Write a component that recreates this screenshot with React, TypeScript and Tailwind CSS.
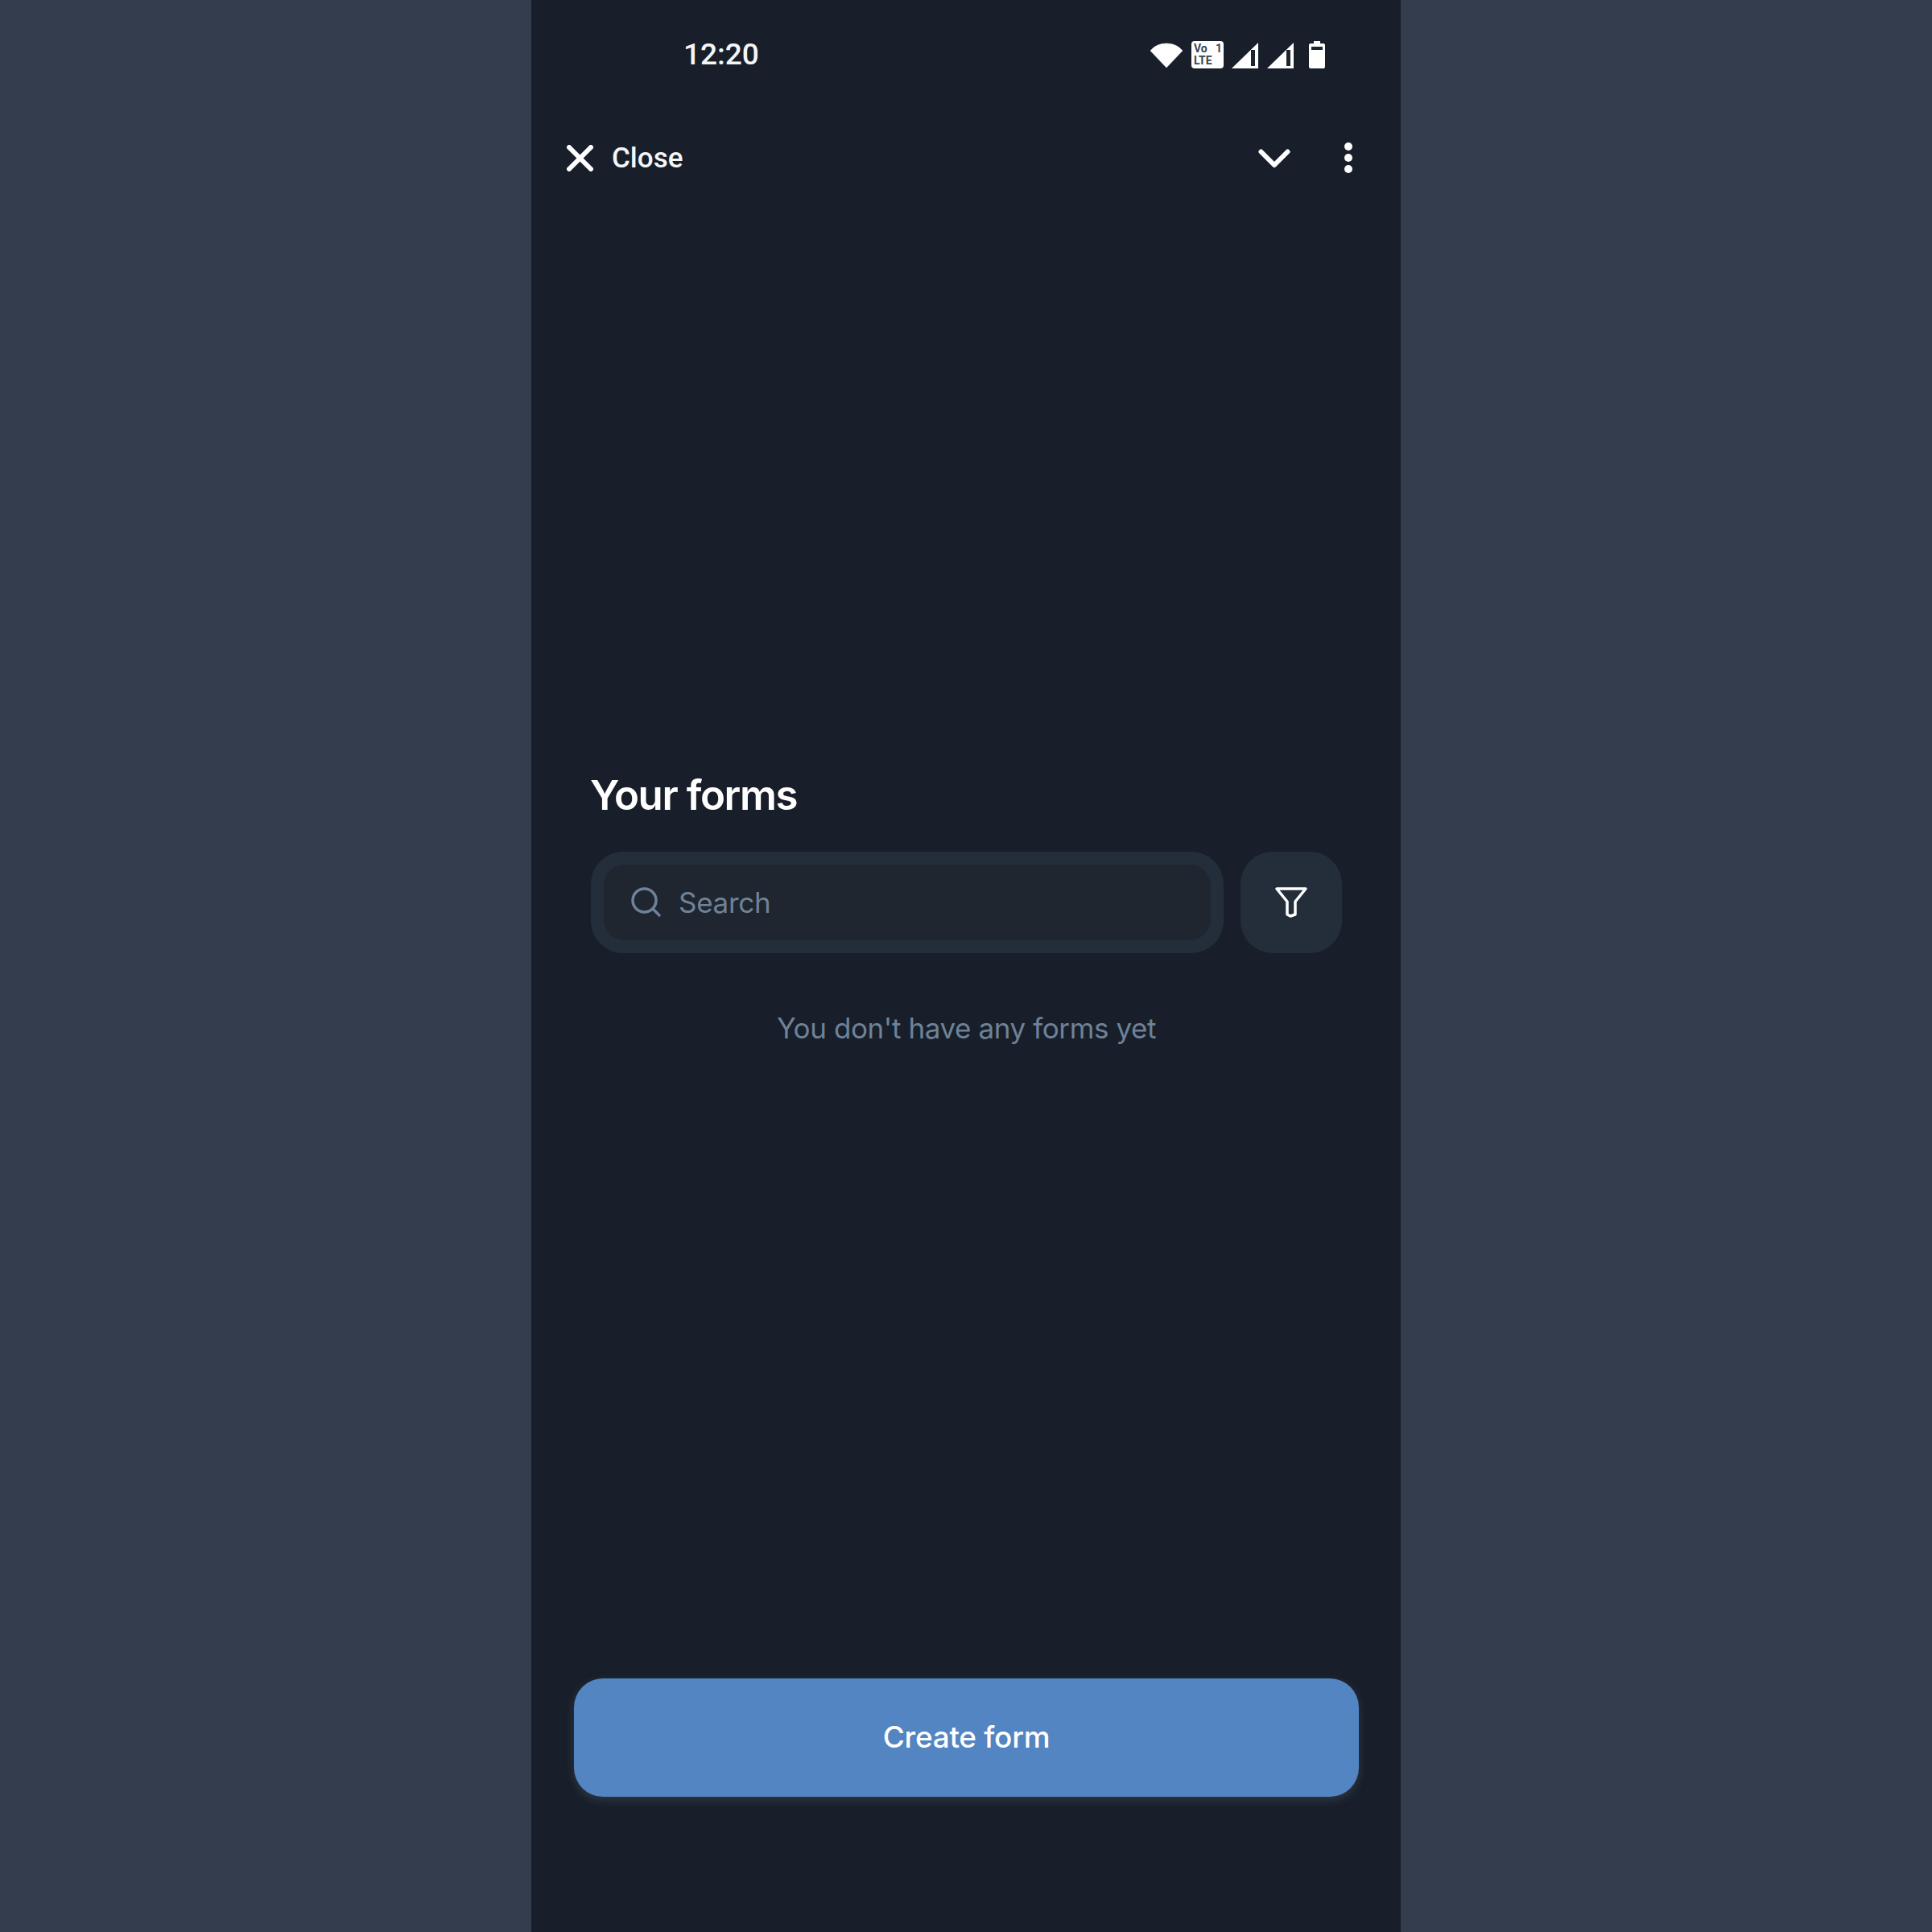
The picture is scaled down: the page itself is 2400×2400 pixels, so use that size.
const sans = "font-['Inter','Noto_Sans',sans-serif]";

function StatusIcons() {
  return (
    <div className="flex items-center text-white pt-[2px]">
      <svg className="w-[42px] h-[34px] mr-[10px]" viewBox="0 0 42 34" fill="#fff">
        <path d="M1 12C6 6 13 3 21 3S36 6 41 12L21 33Z" stroke="#fff" strokeLinejoin="round" strokeWidth="0.5" />
      </svg>
      <div className="w-[40px] h-[34px] mr-[10px] bg-white rounded-[4px] flex flex-col justify-center pl-[3px] pr-[2px] text-[#3a4554] font-['Roboto',sans-serif] font-bold text-[14px] leading-[15px]">
        <div className="flex justify-between"><span>Vo</span><span>1</span></div>
        <div>LTE</div>
      </div>
      <svg className="w-[33px] h-[33px] mr-[11px]" viewBox="0 0 33 33">
        <path d="M0 33 33 1V33Z" fill="#fff" />
        <rect x="24" y="10" width="5" height="20" fill="#1d2530" />
      </svg>
      <svg className="w-[33px] h-[33px] mr-[19px]" viewBox="0 0 33 33">
        <path d="M0 33 33 1V33Z" fill="#fff" />
        <rect x="24" y="10" width="5" height="20" fill="#1d2530" />
      </svg>
      <svg className="w-[20px] h-[34px]" viewBox="0 0 20 34">
        <path d="M6 0H14V3H18A2 2 0 0 1 20 5V32A2 2 0 0 1 18 34H2A2 2 0 0 1 0 32V5A2 2 0 0 1 2 3H6Z" fill="#fff" />
        <rect x="3" y="7" width="14" height="4" fill="#1d2530" />
      </svg>
    </div>
  );
}

export default function App() {
  return (
    <div className="w-[2400px] h-[2400px] bg-[#343d4e] flex justify-center">
      <div className="w-[1080px] h-[2400px] bg-[#181f2a] flex flex-col">
        <div className="h-[134px] pl-[189px] pr-[94px] flex items-center justify-between">
          <span className="font-['Roboto',sans-serif] font-medium text-[37px] leading-none text-[#f4f6f8]">12:20</span>
          <StatusIcons />
        </div>

        <div className="h-[124px] pl-[44px] pr-[60px] flex items-center justify-between">
          <div className="flex items-center gap-[23px]">
            <svg className="w-[33px] h-[33px]" viewBox="0 0 33 33" fill="none" stroke="#fff" strokeWidth="6" strokeLinecap="round">
              <path d="M3 3 30 30M30 3 3 30" />
            </svg>
            <span className="font-['Roboto',sans-serif] font-medium text-[35px] leading-none text-[#f4f6f8]">Close</span>
          </div>
          <div className="flex items-center gap-[67px]">
            <svg className="w-[40px] h-[24px] mt-[2px]" viewBox="0 0 40 24" fill="none" stroke="#fff" strokeWidth="6" strokeLinecap="round" strokeLinejoin="round">
              <path d="M3.500 3.500 20 20 36.500 3.500" />
            </svg>
            <div className="flex flex-col gap-[4px]">
              <span className="w-[10px] h-[10px] rounded-full bg-white" />
              <span className="w-[10px] h-[10px] rounded-full bg-white" />
              <span className="w-[10px] h-[10px] rounded-full bg-white" />
            </div>
          </div>
        </div>

        <div className="flex-1 flex flex-col pt-[698px] pl-[74px] pr-[73px]">
          <h1 className={`${sans} font-semibold text-[51px] tracking-[-1.4px] leading-[64px] text-white mb-[38px] ml-[-1px]`}>Your forms</h1>
          <div className="flex gap-[21px]">
            <div className="flex-1 h-[126px] rounded-[40px] bg-[#242e3a] p-[16px]">
              <div className="h-full rounded-[26px] bg-[#1f2630] flex items-center pl-[34px] gap-[21px]">
                <svg className="w-[38px] h-[38px]" viewBox="0 0 38 38" fill="none" stroke="#6f8297" strokeWidth="3.500" strokeLinecap="round">
                  <circle cx="16.500" cy="16.500" r="14.500" />
                  <path d="M27 27 35 35" />
                </svg>
                <span className={`${sans} text-[35px] leading-none text-[#6f8297] tracking-[-0.3px]`}>Search</span>
              </div>
            </div>
            <div className="w-[126px] h-[126px] rounded-[40px] bg-[#242e3a] flex items-center justify-center">
              <svg className="w-[40px] h-[38px]" viewBox="0 0 40 38" fill="none" stroke="#fff" strokeWidth="3.500" strokeLinejoin="round">
                <path d="M2 2H38L25 18V34L19 36 15 34V18Z" />
              </svg>
            </div>
          </div>
          <p className={`${sans} text-[35px] leading-[44px] text-[#6f8297] text-center mt-[71px] tracking-[-0.4px]`}>You don't have any forms yet</p>
        </div>

        <div className="pl-[53px] pr-[52px] pb-[168px]">
          <div className={`h-[147px] rounded-[36px] bg-[#5285c1] shadow-[0_4px_12px_rgba(120,130,150,0.25)] flex items-center justify-center ${sans} font-medium text-[37px] leading-none pb-[2px] tracking-[-0.3px] text-white`}>Create form</div>
        </div>
      </div>
    </div>
  );
}
